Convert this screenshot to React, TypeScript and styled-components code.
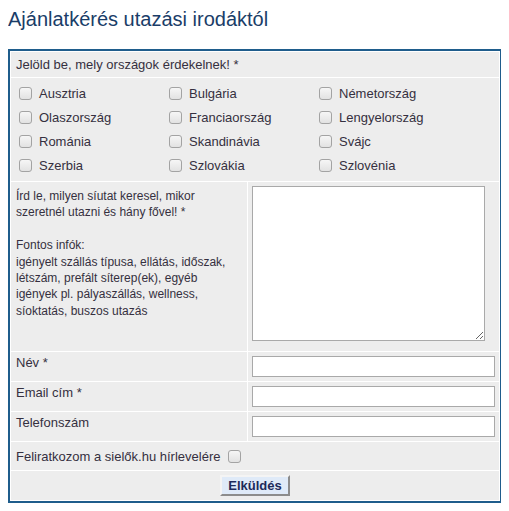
import React from "react";
import styled, { createGlobalStyle } from "styled-components";

const countries = [
  "Ausztria",
  "Bulgária",
  "Németország",
  "Olaszország",
  "Franciaország",
  "Lengyelország",
  "Románia",
  "Skandinávia",
  "Svájc",
  "Szerbia",
  "Szlovákia",
  "Szlovénia",
];

const contactFields = ["Név *", "Email cím *", "Telefonszám"];

export default function App() {
  return (
    <>
      <GlobalStyle />
      <Title>Ajánlatkérés utazási irodáktól</Title>
      <FormBox onSubmit={(e) => e.preventDefault()}>
        <WideCell>Jelöld be, mely országok érdekelnek! *</WideCell>

        <CountryCell>
          {countries.map((c) => (
            <CheckItem key={c}>
              <Check type="checkbox" />
              {c}
            </CheckItem>
          ))}
        </CountryCell>

        <InfoCell>
          Írd le, milyen síutat keresel, mikor szeretnél utazni és hány fővel! *
          <br />
          <br />
          Fontos infók:
          <br />
          igényelt szállás típusa, ellátás, időszak, létszám, prefált
          síterep(ek), egyéb igények pl. pályaszállás, wellness, síoktatás,
          buszos utazás
        </InfoCell>
        <AreaCell>
          <MessageArea />
        </AreaCell>

        {contactFields.map((f) => (
          <React.Fragment key={f}>
            <LabelCell>{f}</LabelCell>
            <InputCell>
              <TextInput type="text" />
            </InputCell>
          </React.Fragment>
        ))}

        <NewsletterCell>
          Feliratkozom a sielők.hu hírlevelére
          <Check type="checkbox" />
        </NewsletterCell>

        <SubmitCell>
          <SubmitButton type="submit">Elküldés</SubmitButton>
        </SubmitCell>
      </FormBox>
    </>
  );
}

const GlobalStyle = createGlobalStyle`
  body {
    margin: 8px;
    background: #fff;
    font-family: "Liberation Sans", Arial, sans-serif;
    color: #353040;
  }
`;

const Title = styled.h1`
  margin: 0 0 18px;
  font-size: 20px;
  line-height: 23px;
  font-weight: normal;
  color: #1a3d68;
`;

const FormBox = styled.form`
  display: grid;
  grid-template-columns: 236px 1fr;
  gap: 1px;
  width: 494px;
  box-sizing: border-box;
  padding: 1px;
  border: 2px solid #1f5d8c;
  background: #fff;
  font-size: 13px;
  line-height: 15px;
`;

const Cell = styled.div`
  background: #ededed;
  padding: 4px 5px;
`;

const WideCell = styled(Cell)`
  grid-column: 1 / -1;
  padding: 5px 5px;
`;

const CountryCell = styled(Cell)`
  grid-column: 1 / -1;
  display: grid;
  grid-template-columns: repeat(3, 150px);
  grid-auto-rows: 24px;
  padding: 3px 8px 4px;
`;

const CheckItem = styled.label`
  display: flex;
  align-items: center;
  gap: 7px;
`;

const Check = styled.input`
  appearance: none;
  width: 13px;
  height: 13px;
  margin: 0;
  border: 1px solid #a3a3a3;
  border-radius: 3px;
  background: linear-gradient(#f6f6f6, #e2e2e2);
  box-sizing: border-box;
  flex: none;
`;

const InfoCell = styled(Cell)`
  padding: 6px 5px 4px;
  font-size: 12px;
  line-height: 16.4px;
`;

const AreaCell = styled(Cell)`
  padding: 4px 4px 10px;
`;

const MessageArea = styled.textarea`
  display: block;
  width: 233px;
  height: 155px;
  box-sizing: border-box;
  margin: 0;
  border: 1px solid #a9a9a9;
  background: #fff;
`;

const LabelCell = styled(Cell)`
  padding: 3px 5px;
`;

const InputCell = styled(Cell)`
  padding: 4px;
`;

const TextInput = styled.input`
  display: block;
  width: 100%;
  height: 21px;
  box-sizing: border-box;
  margin: 0;
  border: 1px solid #a9a9a9;
  background: #fff;
`;

const NewsletterCell = styled(Cell)`
  grid-column: 1 / -1;
  display: flex;
  align-items: center;
  gap: 8px;
  height: 28px;
  box-sizing: border-box;
  padding: 0 5px;
`;

const SubmitCell = styled(Cell)`
  grid-column: 1 / -1;
  display: flex;
  justify-content: center;
  padding: 4px;
`;

const SubmitButton = styled.button`
  height: 21px;
  margin: 0;
  padding: 0 6px;
  font-family: "Liberation Sans", Arial, sans-serif;
  font-size: 13px;
  font-weight: bold;
  color: #1c2a5a;
  background: #dfeaf8;
  border: 2px solid;
  border-color: #f4f4f4 #8c8c8c #8c8c8c #f4f4f4;
`;
